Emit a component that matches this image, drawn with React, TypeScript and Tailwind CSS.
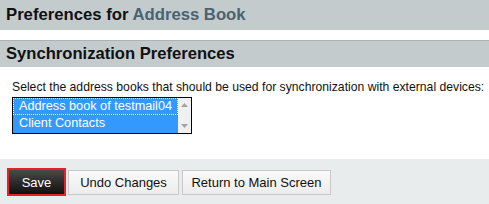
import React from 'react';

const books = ['Address book of testmail04', 'Client Contacts'];

const App: React.FC = () => {
  return (
    <div className="w-[489px] h-[204px] bg-white flex flex-col font-['Liberation_Sans',Arial,sans-serif] overflow-hidden">
      {/* Page title */}
      <div className="h-[30px] bg-[#c3cbcd] flex items-center px-[6px]">
        <h1 className="text-[16.7px] font-bold text-[#111] leading-none">
          Preferences for <span className="text-[#4a6372]">Address Book</span>
        </h1>
      </div>

      <div className="h-[10px]" />

      {/* Section header */}
      <div className="h-[27px] bg-[#c3cbcd] border-t border-[#a9b2b4] flex items-center px-[6px]">
        <h2 className="text-[16.6px] font-bold text-[#111] leading-none">Synchronization Preferences</h2>
      </div>

      <div className="px-[12px] pt-[12px] flex-1">
        <p className="text-[12.2px] text-[#111] leading-[16px] whitespace-nowrap">
          Select the address books that should be used for synchronization with external devices:
        </p>
        <div className="mt-[2px] w-[180px] h-[37px] border border-black flex">
          <div className="flex-1 bg-[#3399ff] flex flex-col">
            {books.map((b, i) => (
              <div
                key={b}
                className={
                  'h-[17px] px-[5px] text-[12.7px] leading-[15px] text-white whitespace-nowrap ' +
                  (i === 0 ? 'border border-dotted border-white' : 'border border-transparent')
                }
              >
                {b}
              </div>
            ))}
          </div>
          <div className="w-[17px] bg-[#f0f0f0] flex flex-col items-center justify-between py-[5px]">
            <svg width="7" height="4" viewBox="0 0 7 4"><path d="M0 4 L3.5 0 L7 4 Z" fill="#a3a3a3" /></svg>
            <svg width="7" height="4" viewBox="0 0 7 4"><path d="M0 0 L3.5 4 L7 0 Z" fill="#a3a3a3" /></svg>
          </div>
        </div>
      </div>

      {/* Footer actions */}
      <div className="h-[45px] bg-[#e9eced] flex items-start gap-[2px] pl-[7px] pt-[9px]">
        <div className="h-[28px] border-[2px] border-[#e8202a] flex">
          <button className="w-[55px] h-full bg-gradient-to-b from-[#4a4a4a] to-[#111] text-white text-[13px] leading-none">
            Save
          </button>
        </div>
        <button className="mt-[2px] h-[25px] w-[111px] border border-[#c9c9c9] bg-gradient-to-b from-[#fafafa] to-[#ececec] text-[13px] text-[#111] leading-none">
          Undo Changes
        </button>
        <button className="ml-[1px] mt-[2px] h-[25px] w-[149px] border border-[#c9c9c9] bg-gradient-to-b from-[#fafafa] to-[#ececec] text-[13px] text-[#111] leading-none">
          Return to Main Screen
        </button>
      </div>
    </div>
  );
};

export default App;
